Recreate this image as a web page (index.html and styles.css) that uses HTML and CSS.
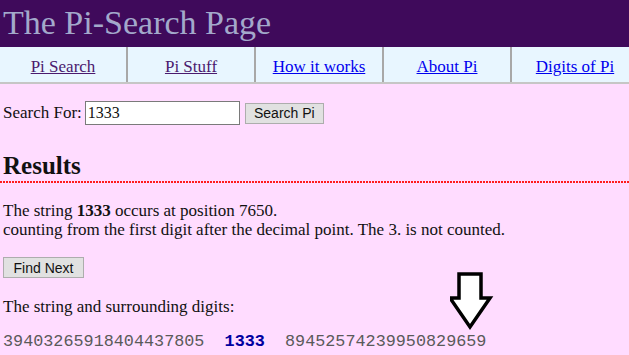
FILE: index.html
```html
<!DOCTYPE html>
<html lang="en">
<head>
    <meta charset="UTF-8">
    <title>The Pi-Search Page</title>
    <link rel="stylesheet" href="styles.css">
</head>
<body>

    <!-- Title bar -->
    <div class="header">
        <h1>The Pi-Search Page</h1>
    </div>

    <!-- Menu -->
    <div class="menu">
        <a href="#" class="visited">Pi Search</a>
        <a href="#" class="visited">Pi Stuff</a>
        <a href="#">How it works</a>
        <a href="#">About Pi</a>
        <a href="#">Digits of Pi</a>
    </div>

    <div class="content">
        <form class="search">
            <label for="q">Search For:</label>
            <input type="text" id="q" value="1333">
            <button type="button" class="btn">Search Pi</button>
        </form>

        <h2>Results</h2>
        <div class="rule"></div>

        <p class="result">
            The string <b>1333</b> occurs at position 7650.<br>
            counting from the first digit after the decimal point. The 3. is not counted.
        </p>

        <button type="button" class="btn next">Find Next</button>

        <p class="label">The string and surrounding digits:</p>
        <div class="digits">39403265918404437805  <b>1333</b>  89452574239950829659</div>

        <!-- pointer arrow -->
        <svg class="arrow" width="44" height="60" viewBox="0 0 44 60">
            <path d="M9 2 H31 V26 H40 L20 55 L0 26 H9 Z" fill="#fff" stroke="#000" stroke-width="3.5"/>
        </svg>
    </div>

</body>
</html>
```

FILE: styles.css
```css
/* General */
* {
    box-sizing: border-box;
}

body {
    margin: 0;
    background-color: #ffdcff;
    font-family: "Liberation Serif", "Times New Roman", serif;
    font-size: 17px;
    color: #111;
    overflow: hidden;
}

/* Title bar */
.header {
    background-color: #3f0a5b;
    height: 47px;
    padding: 4px 0 0 3px;
}

.header h1 {
    margin: 0;
    font-weight: normal;
    font-size: 34px;
    line-height: 38px;
    color: #a3a9cb;
}

/* Menu */
.menu {
    display: flex;
    height: 37px;
    background-color: #e8f6ff;
    border-bottom: 2px solid #c6c6c6;
}

.menu a {
    flex: 0 0 128px;
    text-align: center;
    padding-top: 10px;
    line-height: 19px;
    color: #0000ee;
    border-right: 2px solid #a8a8a8;
}

.menu a.visited {
    color: #4b1a6e;
}

/* Content */
.content {
    position: relative;
    padding: 17px 3px 0;
}

.search {
    display: flex;
    align-items: center;
    margin: 0;
    height: 24px;
}

.search label {
    margin-right: 3px;
}

.search input {
    width: 155px;
    height: 24px;
    margin: 0 5px 0 0;
    padding: 0 2px;
    border: 1px solid #7a7a7a;
    background: #fff;
    font-family: "Liberation Serif", serif;
    font-size: 16px;
    color: #111;
}

.btn {
    height: 21px;
    padding: 0;
    background-color: #e1e1e1;
    border: 1px solid #adadad;
    font-family: "Liberation Sans", Arial, sans-serif;
    font-size: 14px;
    color: #111;
    white-space: nowrap;
}

.search .btn {
    width: 79px;
}

h2 {
    margin: 27px 0 0;
    padding-bottom: 1px;
    font-size: 25px;
    line-height: 28px;
}

.rule {
    height: 2px;
    margin: 0 -3px;
    background-image: linear-gradient(to right, #ff1c1c 66%, transparent 66%);
    background-size: 3px 2px;
    background-repeat: repeat-x;
}

.result {
    margin: 18px 0 0;
    line-height: 19px;
}

.next {
    display: block;
    width: 81px;
    margin-top: 18px;
}

.label {
    margin: 19px 0 0;
    line-height: 19px;
}

.digits {
    margin-top: 16px;
    font-family: "Liberation Mono", "Courier New", monospace;
    font-size: 16.8px;
    line-height: 19px;
    color: #5a5a5a;
    white-space: pre;
}

.digits b {
    color: #0000a0;
}

.arrow {
    position: absolute;
    left: 450px;
    top: 188px;
}
```
